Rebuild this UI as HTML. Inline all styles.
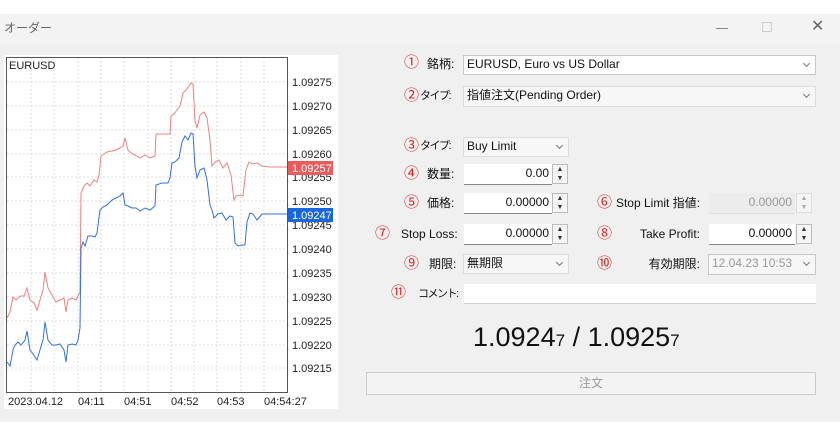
<!DOCTYPE html>
<html><head><meta charset="utf-8"><style>
*{margin:0;padding:0;box-sizing:border-box}
body{width:840px;height:436px;background:#fff;position:relative;overflow:hidden;font-family:"Liberation Sans","Noto Sans CJK JP",sans-serif;font-size:12px;color:#111}
.a{position:absolute}
.c{position:absolute;color:#e02020;font-size:15px;line-height:16px}
.l{position:absolute;font-size:12px;line-height:14px;white-space:nowrap}
.k{font-size:11px;letter-spacing:-1.5px}
.box{position:absolute;background:#fff;border:1px solid #c8c8c8;font-size:12px;line-height:17px;padding-left:3px}
.dd::after{content:"";position:absolute;right:6px;top:5px;width:4px;height:4px;border-right:1px solid #777;border-bottom:1px solid #777;transform:rotate(45deg)}
.in{position:absolute;background:#fff;border-bottom:1px solid #888;text-align:right;padding-right:3px;font-size:12px;line-height:19px}
.sp{position:absolute;width:16px;height:20px;border:1px solid #bbb;background:#f5f5f5;font-size:7px;line-height:9px;text-align:center;color:#333}
.r{text-align:right}
</style></head><body>
<div class="a" style="left:0;top:14px;width:840px;height:30px;background:#f3f3f3"></div>
<div class="l" style="left:4px;top:21px;color:#666;font-size:12px">オーダー</div>
<div class="a" style="left:716px;top:28px;width:12px;height:1px;background:#888"></div>
<div class="a" style="left:762px;top:22px;width:10px;height:10px;border:1px solid #ccc"></div>
<div class="l" style="left:811px;top:20px;color:#666;font-size:16px">✕</div>
<div class="a" style="left:0;top:44px;width:840px;height:378px;background:#f0f0f0"></div>
<div class="a" style="left:4px;top:55px;width:334px;height:354px;background:#fff"></div>
<svg class="a" style="left:0;top:0" width="340" height="420">
<g stroke="#ddd" stroke-dasharray="2,2" stroke-width="1">
<line x1="31" y1="57" x2="31" y2="392"/><line x1="54" y1="57" x2="54" y2="392"/><line x1="78" y1="57" x2="78" y2="392"/><line x1="101" y1="57" x2="101" y2="392"/><line x1="124" y1="57" x2="124" y2="392"/><line x1="148" y1="57" x2="148" y2="392"/><line x1="171" y1="57" x2="171" y2="392"/><line x1="194" y1="57" x2="194" y2="392"/><line x1="217" y1="57" x2="217" y2="392"/><line x1="241" y1="57" x2="241" y2="392"/><line x1="264" y1="57" x2="264" y2="392"/>
<line x1="7" y1="82" x2="287" y2="82"/><line x1="7" y1="106" x2="287" y2="106"/><line x1="7" y1="130" x2="287" y2="130"/><line x1="7" y1="154" x2="287" y2="154"/><line x1="7" y1="177" x2="287" y2="177"/><line x1="7" y1="201" x2="287" y2="201"/><line x1="7" y1="225" x2="287" y2="225"/><line x1="7" y1="249" x2="287" y2="249"/><line x1="7" y1="273" x2="287" y2="273"/><line x1="7" y1="297" x2="287" y2="297"/><line x1="7" y1="321" x2="287" y2="321"/><line x1="7" y1="345" x2="287" y2="345"/><line x1="7" y1="368" x2="287" y2="368"/>
</g>
<rect x="6.5" y="57.5" width="281" height="335" fill="none" stroke="#555"/>
<polyline fill="none" stroke="#f08080" stroke-width="1" points="7,318 10,312 13,297 16,300 20,296 24,296 27,288 30,300 34,303 37,310 40,300 43,290 45,272 48,288 52,295 56,302 60,300 64,298 66,312 68,300 72,298 76,300 78,296 80,292 81,193 84,186 87,183 90,186 94,180 97,182 99,175 101,156 104,154 107,152 112,151 116,150 120,148 123,146 125,138 128,150 131,153 135,155 140,158 145,155 150,158 155,156 156,134 162,134 170,134 171,116 174,114 177,110 180,106 183,93 186,90 189,86 191,83 193,84 195,120 197,128 200,115 204,112 207,118 210,140 212,166 215,162 219,160 223,168 227,163 231,175 234,200 236,196 240,195 243,196 246,170 249,162 252,164 257,163 262,166 270,167 287,167"/>
<polyline fill="none" stroke="#3070e0" stroke-width="1" points="7,362 10,366 13,350 15,345 18,342 21,345 25,340 27,331 30,350 33,354 37,360 40,350 43,340 45,322 48,340 52,345 56,345 60,344 64,350 66,362 68,345 72,344 76,345 78,340 80,328 81,248 83,242 85,246 88,236 92,236 95,237 97,233 100,210 103,207 107,205 112,200 116,198 120,196 123,193 125,205 128,206 132,208 136,208 140,211 145,208 150,210 155,206 156,185 162,183 168,183 170,178 172,163 175,162 179,158 182,142 185,136 188,140 191,133 193,134 195,166 197,178 200,170 204,168 207,180 210,205 212,210 214,218 218,214 222,213 226,220 230,216 233,217 235,243 238,246 242,245 245,245 247,222 250,213 253,214 257,220 262,214 270,214 287,214"/>
<g font-family="Liberation Sans, sans-serif" font-size="11" fill="#222">
<text x="9" y="69">EURUSD</text>
<text x="292" y="86">1.09275</text><text x="292" y="110">1.09270</text><text x="292" y="134">1.09265</text><text x="292" y="158">1.09260</text><text x="292" y="181">1.09255</text><text x="292" y="205">1.09250</text><text x="292" y="229">1.09245</text><text x="292" y="253">1.09240</text><text x="292" y="277">1.09235</text><text x="292" y="301">1.09230</text><text x="292" y="325">1.09225</text><text x="292" y="349">1.09220</text><text x="292" y="372">1.09215</text>
<rect x="288" y="161" width="45" height="14" fill="#ec5b5b"/><text x="292" y="172" fill="#fff">1.09257</text>
<rect x="288" y="208" width="45" height="14" fill="#1a66dd"/><text x="292" y="219" fill="#fff">1.09247</text>
<text x="8" y="405">2023.04.12</text><text x="78" y="405">04:11</text><text x="124" y="405">04:51</text><text x="171" y="405">04:52</text><text x="217" y="405">04:53</text><text x="264" y="405">04:54:27</text>
</g>
</svg>
<div class="c" style="left:404px;top:55px">①</div><div class="l" style="left:427px;top:57px">銘柄:</div>
<div class="box dd" style="left:463px;top:55px;width:353px;height:20px">EURUSD, Euro vs US Dollar</div>
<div class="c" style="left:404px;top:88px">②</div><div class="l k" style="left:420px;top:89px">タイプ:</div>
<div class="box dd" style="left:463px;top:86px;width:353px;height:21px;background:#f7f7f7;border-color:#ddd">指値注文(Pending Order)</div>
<div class="c" style="left:404px;top:138px">③</div><div class="l k" style="left:420px;top:139px">タイプ:</div>
<div class="box dd" style="left:463px;top:137px;width:106px;height:20px;background:#f7f7f7;border-color:#ddd">Buy Limit</div>
<div class="c" style="left:404px;top:166px">④</div><div class="l" style="left:427px;top:167px">数量:</div>
<div class="in" style="left:464px;top:164px;width:88px;height:21px">0.00</div><div class="sp" style="left:552px;top:164px">▲<br>▼</div>
<div class="c" style="left:404px;top:195px">⑤</div><div class="l" style="left:427px;top:196px">価格:</div>
<div class="in" style="left:464px;top:193px;width:88px;height:21px">0.00000</div><div class="sp" style="left:552px;top:193px">▲<br>▼</div>
<div class="c" style="left:597px;top:195px">⑥</div><div class="l r" style="left:600px;top:196px;width:100px">Stop Limit 指値:</div>
<div class="in" style="left:709px;top:193px;width:86px;height:21px;background:#ececec;color:#999;border-color:#ddd">0.00000</div><div class="sp" style="left:796px;top:193px;color:#aaa;border-color:#ddd">▲<br>▼</div>
<div class="c" style="left:375px;top:226px">⑦</div><div class="l" style="left:401px;top:227px">Stop Loss:</div>
<div class="in" style="left:464px;top:224px;width:88px;height:21px">0.00000</div><div class="sp" style="left:552px;top:224px">▲<br>▼</div>
<div class="c" style="left:597px;top:226px">⑧</div><div class="l r" style="left:600px;top:227px;width:100px">Take Profit:</div>
<div class="in" style="left:709px;top:224px;width:86px;height:21px">0.00000</div><div class="sp" style="left:796px;top:224px">▲<br>▼</div>
<div class="c" style="left:404px;top:256px">⑨</div><div class="l" style="left:429px;top:257px">期限:</div>
<div class="box dd" style="left:463px;top:254px;width:106px;height:20px;background:#f7f7f7;border-color:#ddd">無期限</div>
<div class="c" style="left:597px;top:256px">⑩</div><div class="l r" style="left:600px;top:257px;width:100px">有効期限:</div>
<div class="box dd" style="left:708px;top:254px;width:108px;height:21px;background:#f7f7f7;color:#999">12.04.23 10:53</div>
<div class="c" style="left:391px;top:285px">⑪</div><div class="l k" style="left:418px;top:287px">コメント:</div>
<div class="in" style="left:464px;top:284px;width:352px;height:20px;border-bottom-color:#ccc"></div>
<div class="l" style="left:473px;top:322px;font-size:27px;line-height:30px;color:#111">1.0924<span style="font-size:17px">7</span> / 1.0925<span style="font-size:17px">7</span></div>
<div class="a" style="left:366px;top:372px;width:450px;height:23px;border:1px solid #ccc;background:#f3f3f3;text-align:center;line-height:21px;color:#999">注文</div>
</body></html>
